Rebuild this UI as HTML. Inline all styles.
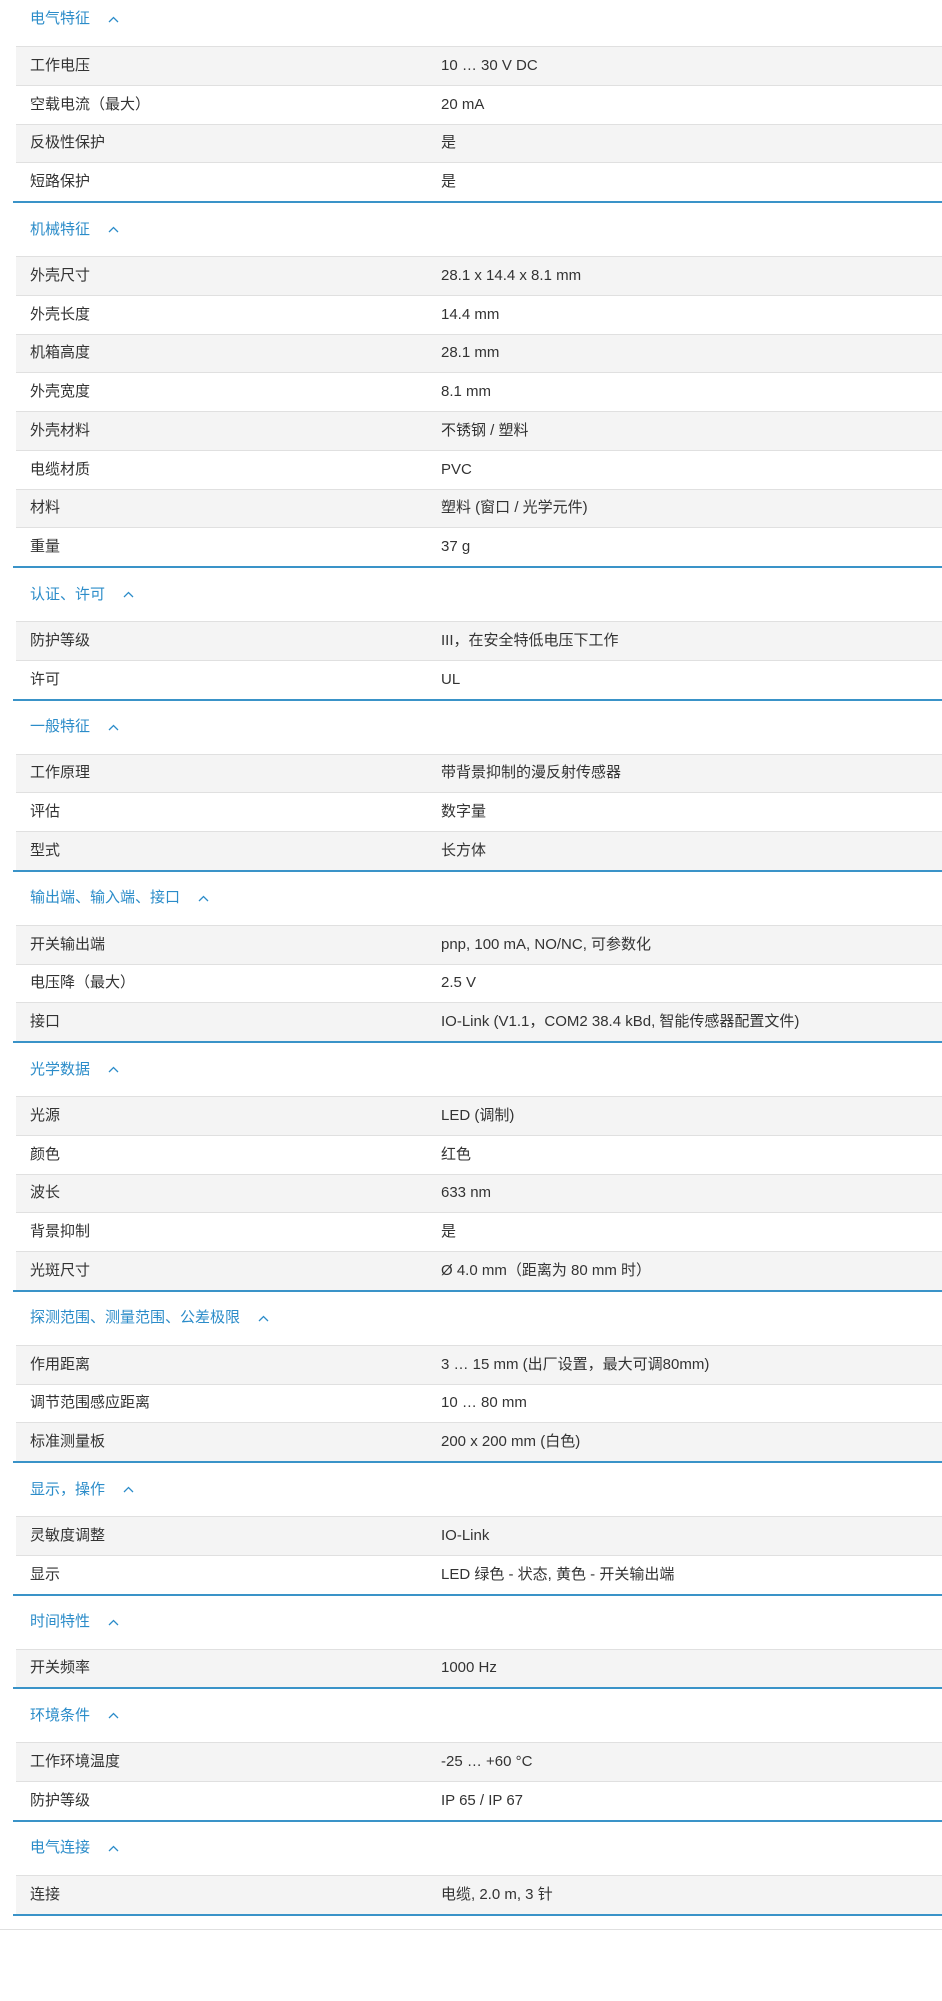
<!DOCTYPE html>
<html><head><meta charset="utf-8"><style>
body{margin:0;width:942px;height:2001px;background:#fff;font-family:"Liberation Sans","Noto Sans CJK SC",sans-serif;font-size:15px;color:#333;overflow:hidden}
.sec{border-bottom:2px solid #3a93c8;margin-left:13px}
.h{height:53px;box-sizing:border-box;padding-left:17px;color:#2b8cc9;font-size:15px;line-height:20px;display:flex;align-items:center;overflow:hidden}
.first .h{height:46px;padding-bottom:8px}
.h svg{margin-left:18px}
.r{height:38.75px;box-sizing:border-box;border-top:1px solid #e0e0e0;display:flex;align-items:center;margin-left:3px;overflow:hidden}
.r span{display:block;height:20px;line-height:20px}
.r span:first-child{width:411px;padding-left:14px}
.end{border-top:1px solid #e0e0e0;margin-top:13px}
</style></head><body>
<div id="c"></div>
<script>
const d=[["电气特征",[["工作电压","10 … 30 V DC"],["空载电流（最大）","20 mA"],["反极性保护","是"],["短路保护","是"]]],
["机械特征",[["外壳尺寸","28.1 x 14.4 x 8.1 mm"],["外壳长度","14.4 mm"],["机箱高度","28.1 mm"],["外壳宽度","8.1 mm"],["外壳材料","不锈钢 / 塑料"],["电缆材质","PVC"],["材料","塑料 (窗口 / 光学元件)"],["重量","37 g"]]],
["认证、许可",[["防护等级","III，在安全特低电压下工作"],["许可","UL"]]],
["一般特征",[["工作原理","带背景抑制的漫反射传感器"],["评估","数字量"],["型式","长方体"]]],
["输出端、输入端、接口",[["开关输出端","pnp, 100 mA, NO/NC, 可参数化"],["电压降（最大）","2.5 V"],["接口","IO-Link (V1.1，COM2 38.4 kBd, 智能传感器配置文件)"]]],
["光学数据",[["光源","LED (调制)"],["颜色","红色"],["波长","633 nm"],["背景抑制","是"],["光斑尺寸","Ø 4.0 mm（距离为 80 mm 时）"]]],
["探测范围、测量范围、公差极限",[["作用距离","3 … 15 mm (出厂设置，最大可调80mm)"],["调节范围感应距离","10 … 80 mm"],["标准测量板","200 x 200 mm (白色)"]]],
["显示，操作",[["灵敏度调整","IO-Link"],["显示","LED 绿色 - 状态, 黄色 - 开关输出端"]]],
["时间特性",[["开关频率","1000 Hz"]]],
["环境条件",[["工作环境温度","-25 … +60 °C"],["防护等级","IP 65 / IP 67"]]],
["电气连接",[["连接","电缆, 2.0 m, 3 针"]]]];
let h="";d.forEach((s,i)=>{h+='<div class="sec'+(i?'':' first')+'"><div class="h">'+s[0]+'<svg width="11" height="7" viewBox="0 0 11 7"><path d="M1 6L5.5 1.5L10 6" fill="none" stroke="#2b8cc9" stroke-width="1.3"/></svg></div><div>';
s[1].forEach((r,j)=>{h+='<div class="r" style="background:'+(j%2?'#fff':'#f4f4f4')+'"><span>'+r[0]+'</span><span>'+r[1]+'</span></div>'});h+='</div></div>'});
h+='<div class="end"></div>';document.getElementById("c").innerHTML=h;
</script>
</body></html>
